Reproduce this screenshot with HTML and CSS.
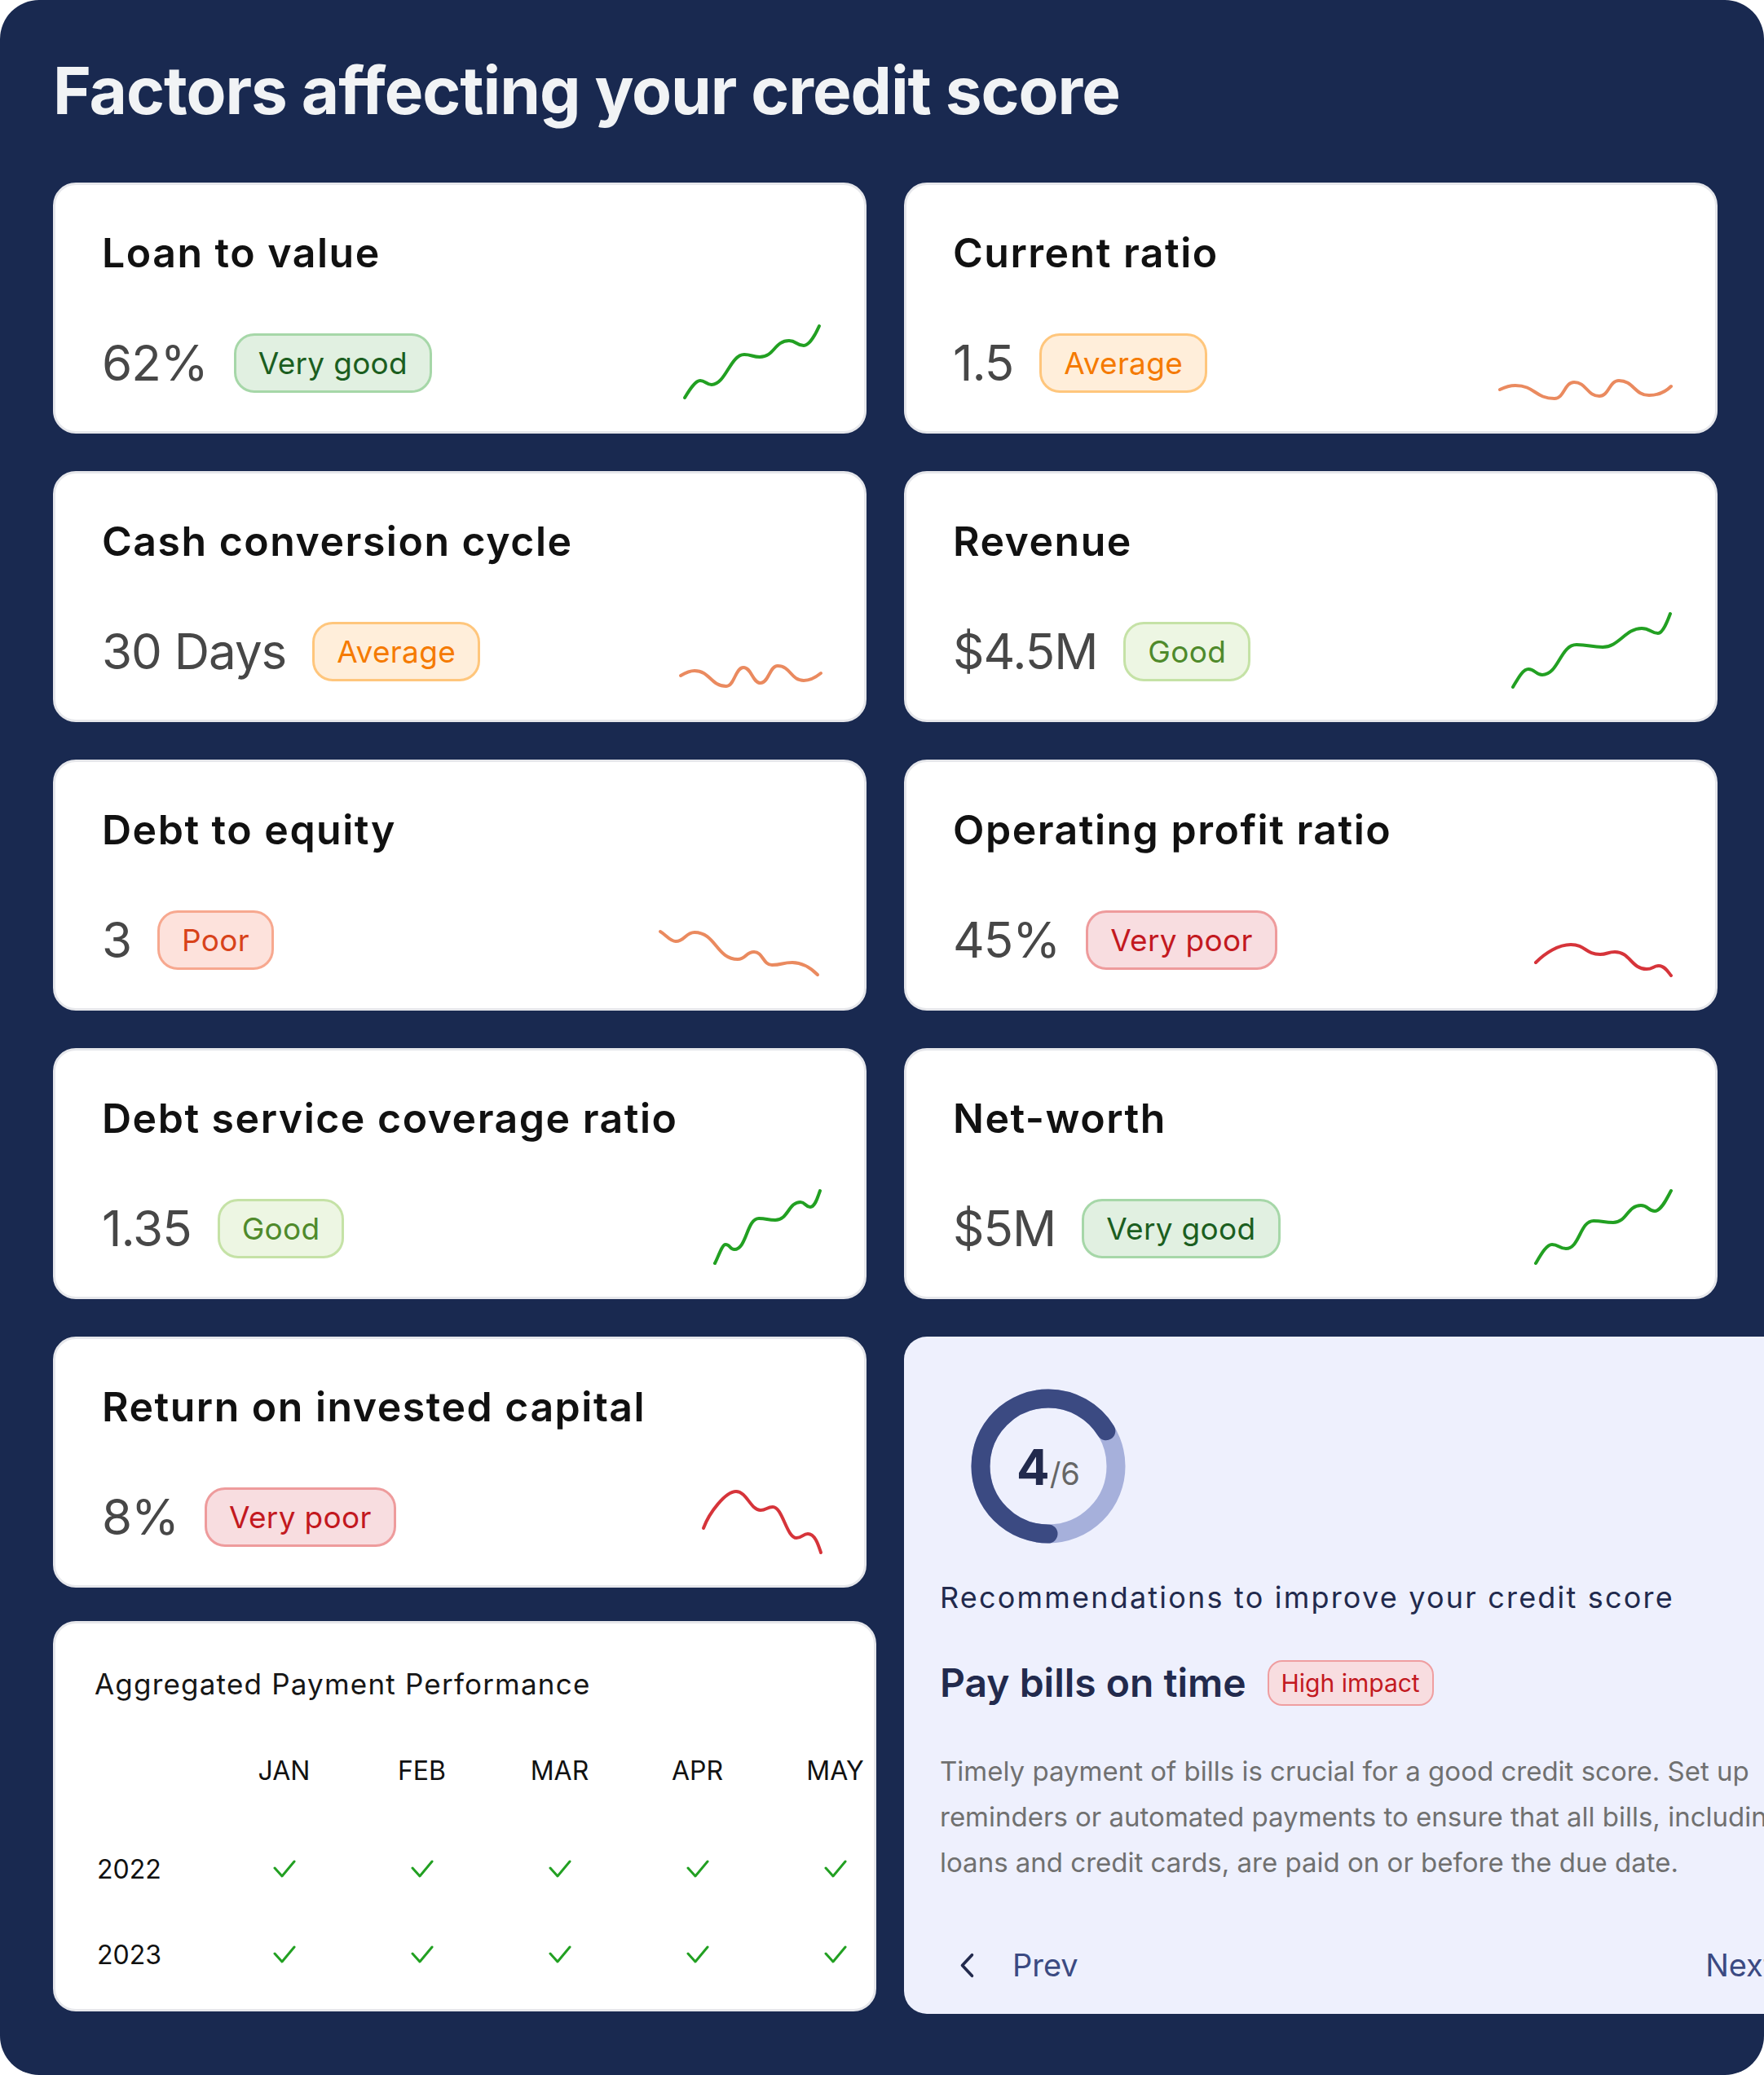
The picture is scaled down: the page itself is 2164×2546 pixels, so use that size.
FILE: index.html
```html
<!DOCTYPE html>
<html>
<head>
<meta charset="utf-8">
<title>Factors affecting your credit score</title>
<link rel="stylesheet" href="styles.css">
</head>
<body>
<div class="panel">
  <h1 class="heading">Factors affecting your credit score</h1>

  <div class="grid">
    <div class="card">
      <div class="card-title">Loan to value</div>
      <div class="card-row">
        <span class="value">62%</span>
        <span class="badge badge-vgood">Very good</span>
        <svg class="spark" viewBox="0 0 220 100"><path class="ln-green" d="M50,93 C56,83 63,72 69,72 C75,72 77,77 83,77 C100,77 106,40 123,40 C132,40 133,43 142,43 C160,43 160,23 178,23 C187,23 187,29 196,29 C203,29 211,14 215,5"/></svg>
      </div>
    </div>

    <div class="card">
      <div class="card-title">Current ratio</div>
      <div class="card-row">
        <span class="value">1.5</span>
        <span class="badge badge-avg">Average</span>
        <svg class="spark" viewBox="0 0 220 100"><path class="ln-orange" d="M6,83 C12,80 18,78 25,78 C49,78 49,94 73,94 C85,94 85,74 97,74 C112,74 113,91 128,91 C140,91 140,72 152,72 C170,72 171,90 189,90 C200,90 210,85 216,79"/></svg>
      </div>
    </div>

    <div class="card">
      <div class="card-title">Cash conversion cycle</div>
      <div class="card-row">
        <span class="value">30 Days</span>
        <span class="badge badge-avg">Average</span>
        <svg class="spark" viewBox="0 0 220 100"><path class="ln-orange" d="M45,80 C50,77 56,74 62,74 C81,74 82,93 101,93 C111,93 112,70 122,70 C132,70 133,89 143,89 C153,89 154,68 164,68 C180,68 180,86 196,86 C205,86 212,81 217,77"/></svg>
      </div>
    </div>

    <div class="card">
      <div class="card-title">Revenue</div>
      <div class="card-row">
        <span class="value">$4.5M</span>
        <span class="badge badge-good">Good</span>
        <svg class="spark" viewBox="0 0 220 100"><path class="ln-green" d="M22,94 C28,84 34,72 41,72 C49,72 50,79 58,79 C78,79 80,42 100,42 C115,42 118,45 132,45 C152,45 160,22 180,22 C190,22 192,28 200,28 C206,28 212,12 215,4"/></svg>
      </div>
    </div>

    <div class="card">
      <div class="card-title">Debt to equity</div>
      <div class="card-row">
        <span class="value">3</span>
        <span class="badge badge-poor">Poor</span>
        <svg class="spark" viewBox="0 0 220 100"><path class="ln-orange" d="M20,40 C27,44 32,52 39,52 C50,52 51,41 62,41 C88,41 89,74 115,74 C125,74 125,65 135,65 C146,65 146,81 157,81 C170,81 169,78 182,78 C195,78 205,85 213,93"/></svg>
      </div>
    </div>

    <div class="card">
      <div class="card-title">Operating profit ratio</div>
      <div class="card-row">
        <span class="value">45%</span>
        <span class="badge badge-vpoor">Very poor</span>
        <svg class="spark" viewBox="0 0 220 100"><path class="ln-red" d="M50,78 C62,66 78,56 93,56 C111,56 111,68 129,68 C138,68 138,65 147,65 C166,65 167,86 186,86 C194,86 194,82 201,82 C208,82 212,89 216,94"/></svg>
      </div>
    </div>

    <div class="card">
      <div class="card-title">Debt service coverage ratio</div>
      <div class="card-row">
        <span class="value">1.35</span>
        <span class="badge badge-good">Good</span>
        <svg class="spark" viewBox="0 0 220 100"><path class="ln-green" d="M87,93 C92,83 96,70 100,70 C106,70 105,76 111,76 C126,76 126,38 141,38 C151,38 151,40 161,40 C177,40 177,18 192,18 C198,18 198,24 204,24 C210,24 213,12 216,4"/></svg>
      </div>
    </div>

    <div class="card">
      <div class="card-title">Net-worth</div>
      <div class="card-row">
        <span class="value">$5M</span>
        <span class="badge badge-vgood">Very good</span>
        <svg class="spark" viewBox="0 0 220 100"><path class="ln-green" d="M50,93 C56,83 63,70 70,70 C78,70 79,75 87,75 C104,75 104,41 121,41 C133,41 133,43 145,43 C162,43 162,22 179,22 C188,22 188,29 196,29 C204,29 211,13 216,4"/></svg>
      </div>
    </div>
  </div>

  <div class="bottom">
    <div class="left-col">
      <div class="card">
        <div class="card-title">Return on invested capital</div>
        <div class="card-row">
          <span class="value">8%</span>
          <span class="badge badge-vpoor">Very poor</span>
          <svg class="spark" viewBox="0 0 220 100"><path class="ln-red" d="M73,64 C80,45 100,19 113,19 C126,19 131,42 143,42 C150,42 151,38 158,38 C170,38 175,76 187,76 C194,76 195,71 201,71 C210,71 214,85 217,94"/></svg>
        </div>
      </div>

      <div class="agg">
        <div class="agg-title">Aggregated Payment Performance</div>
        <div class="agg-row agg-head">
          <span></span><span>JAN</span><span>FEB</span><span>MAR</span><span>APR</span><span>MAY</span>
        </div>
        <div class="agg-row agg-y1">
          <span class="year">2022</span>
          <span><svg class="check" viewBox="0 0 28 22"><polyline points="2,10 11,20 26,2"/></svg></span>
          <span><svg class="check" viewBox="0 0 28 22"><polyline points="2,10 11,20 26,2"/></svg></span>
          <span><svg class="check" viewBox="0 0 28 22"><polyline points="2,10 11,20 26,2"/></svg></span>
          <span><svg class="check" viewBox="0 0 28 22"><polyline points="2,10 11,20 26,2"/></svg></span>
          <span><svg class="check" viewBox="0 0 28 22"><polyline points="2,10 11,20 26,2"/></svg></span>
        </div>
        <div class="agg-row agg-y2">
          <span class="year">2023</span>
          <span><svg class="check" viewBox="0 0 28 22"><polyline points="2,10 11,20 26,2"/></svg></span>
          <span><svg class="check" viewBox="0 0 28 22"><polyline points="2,10 11,20 26,2"/></svg></span>
          <span><svg class="check" viewBox="0 0 28 22"><polyline points="2,10 11,20 26,2"/></svg></span>
          <span><svg class="check" viewBox="0 0 28 22"><polyline points="2,10 11,20 26,2"/></svg></span>
          <span><svg class="check" viewBox="0 0 28 22"><polyline points="2,10 11,20 26,2"/></svg></span>
        </div>
      </div>
    </div>

    <div class="rec">
      <div class="donut">
        <svg viewBox="0 0 190 190" class="donut-svg">
          <circle cx="95" cy="95" r="83" class="donut-bg"/>
          <circle cx="95" cy="95" r="83" class="donut-fg" transform="rotate(90 95 95)"/>
        </svg>
        <div class="donut-label"><span class="donut-num">4</span><span class="donut-den">/6</span></div>
      </div>
      <div class="rec-sub">Recommendations to improve your credit score</div>
      <div class="rec-head">
        <span class="rec-title">Pay bills on time</span>
        <span class="badge-sm">High impact</span>
      </div>
      <p class="rec-desc">Timely payment of bills is crucial for a good credit score. Set up reminders or automated payments to ensure that all bills, including loans and credit cards, are paid on or before the due date.</p>
      <div class="rec-nav">
        <span class="nav-btn"><svg class="chev" viewBox="0 0 24 36"><polyline points="19,4 6,18 19,32"/></svg><span>Prev</span></span>
        <span class="nav-btn"><span>Next</span><svg class="chev" viewBox="0 0 24 36"><polyline points="5,4 18,18 5,32"/></svg></span>
      </div>
    </div>
  </div>
</div>
</body>
</html>
```

FILE: styles.css
```css
* {
  box-sizing: border-box;
  margin: 0;
  padding: 0;
}

body {
  background: #ffffff;
  font-family: Inter, "Noto Sans", "Liberation Sans", sans-serif;
}

.panel {
  width: 2164px;
  height: 2546px;
  background: #192950;
  border-radius: 48px;
  overflow: hidden;
  padding: 63px 0 0 65px;
}

.heading {
  font-size: 80px;
  line-height: 96px;
  font-weight: 700;
  color: #f1f3f5;
  letter-spacing: -0.013em;
  margin-bottom: 65px;
}

.grid {
  display: grid;
  grid-template-columns: 998px 998px;
  column-gap: 46px;
  row-gap: 46px;
}

.card {
  background: #ffffff;
  border: 3px solid #e6e7eb;
  border-radius: 28px;
  height: 308px;
  padding: 53px 50px 0 57px;
  display: flex;
  flex-direction: column;
}

.card-title {
  font-size: 50px;
  line-height: 60px;
  font-weight: 600;
  color: #111111;
  letter-spacing: 1.5px;
}

.card-row {
  display: flex;
  align-items: center;
  height: 100px;
  margin-top: 55px;
}

.value {
  font-size: 60px;
  line-height: 72px;
  color: #474747;
  letter-spacing: -1px;
  margin-right: 32px;
}

.badge {
  font-size: 37px;
  line-height: 45px;
  padding: 11px 27px;
  border: 3px solid;
  border-radius: 25px;
  letter-spacing: 0.3px;
}

.badge-vgood {
  background: #e1f0e1;
  border-color: #a6d7a8;
  color: #1b5e20;
}

.badge-good {
  background: #edf6e3;
  border-color: #c5e2a6;
  color: #4f8a2b;
}

.badge-avg {
  background: #ffeeda;
  border-color: #ffc67c;
  color: #f57a00;
}

.badge-poor {
  background: #fde2dc;
  border-color: #f7a88f;
  color: #d8431a;
}

.badge-vpoor {
  background: #f8dde0;
  border-color: #ee9b9c;
  color: #c3191f;
}

.spark {
  width: 220px;
  height: 100px;
  margin-left: auto;
  fill: none;
  stroke-width: 4;
  stroke-linecap: round;
  stroke-linejoin: round;
}

.ln-green { stroke: #22a022; }
.ln-orange { stroke: #ea8a5f; }
.ln-red { stroke: #d6343a; }

.bottom {
  display: flex;
  align-items: flex-start;
  gap: 34px;
  margin-top: 46px;
}

.left-col {
  width: 1010px;
  flex-shrink: 0;
  display: flex;
  flex-direction: column;
  gap: 41px;
}

.left-col .card {
  width: 998px;
}

.agg {
  height: 479px;
  background: #ffffff;
  border: 3px solid #e6e7eb;
  border-radius: 28px;
  padding: 53px 0 0 48px;
}

.agg-title {
  font-size: 35px;
  line-height: 42px;
  color: #161616;
  letter-spacing: 1.2px;
}

.agg-row {
  display: grid;
  grid-template-columns: 148px repeat(5, 169px);
  align-items: center;
  height: 50px;
  font-size: 32px;
  color: #111111;
}

.agg-row span {
  display: flex;
  justify-content: center;
  align-items: center;
}

.agg-row .year {
  justify-content: flex-start;
  padding-left: 3px;
}

.agg-head { margin-top: 60px; }
.agg-y1 { margin-top: 71px; }
.agg-y2 { margin-top: 55px; }

.check {
  width: 28px;
  height: 22px;
  fill: none;
  stroke: #22a022;
  stroke-width: 3;
  stroke-linecap: round;
  stroke-linejoin: round;
}

.rec {
  width: 1200px;
  flex-shrink: 0;
  height: 831px;
  background: #eef0fd;
  border-radius: 28px;
  padding: 64px 44px 0;
}

.donut {
  width: 190px;
  height: 190px;
  margin-left: 38px;
  display: grid;
  place-items: center;
}

.donut-svg {
  grid-area: 1 / 1;
  width: 190px;
  height: 190px;
  fill: none;
}

.donut-bg {
  stroke: #a6b0db;
  stroke-width: 23;
}

.donut-fg {
  stroke: #3b4a82;
  stroke-width: 23;
  stroke-linecap: round;
  stroke-dasharray: 345 600;
}

.donut-label {
  grid-area: 1 / 1;
  display: flex;
  align-items: baseline;
  margin-top: 2px;
}

.donut-num {
  font-size: 60px;
  font-weight: 700;
  color: #222a4d;
  line-height: 70px;
}

.donut-den {
  font-size: 38px;
  color: #666666;
}

.rec-sub {
  margin-top: 44px;
  font-size: 36px;
  line-height: 44px;
  color: #222a4d;
  letter-spacing: 2.2px;
}

.rec-head {
  display: flex;
  align-items: center;
  gap: 26px;
  margin-top: 54px;
  height: 58px;
}

.rec-title {
  font-size: 48px;
  line-height: 58px;
  font-weight: 600;
  color: #222a4d;
}

.badge-sm {
  font-size: 30px;
  line-height: 36px;
  padding: 8px 15px;
  border: 2px solid #ef9ea0;
  border-radius: 18px;
  background: #f8dde0;
  color: #c3191f;
}

.rec-desc {
  margin-top: 51px;
  width: 1080px;
  font-size: 33px;
  line-height: 56px;
  color: #707070;
}

.rec-nav {
  display: flex;
  justify-content: space-between;
  align-items: center;
  width: 1112px;
  height: 60px;
  margin-top: 68px;
  padding: 0 22px;
}

.nav-btn {
  display: flex;
  align-items: center;
  gap: 45px;
  font-size: 38px;
  color: #3b4a82;
}

.chev {
  width: 22px;
  height: 33px;
  fill: none;
  stroke: #222a4d;
  stroke-width: 4;
  stroke-linecap: round;
  stroke-linejoin: round;
}
```
